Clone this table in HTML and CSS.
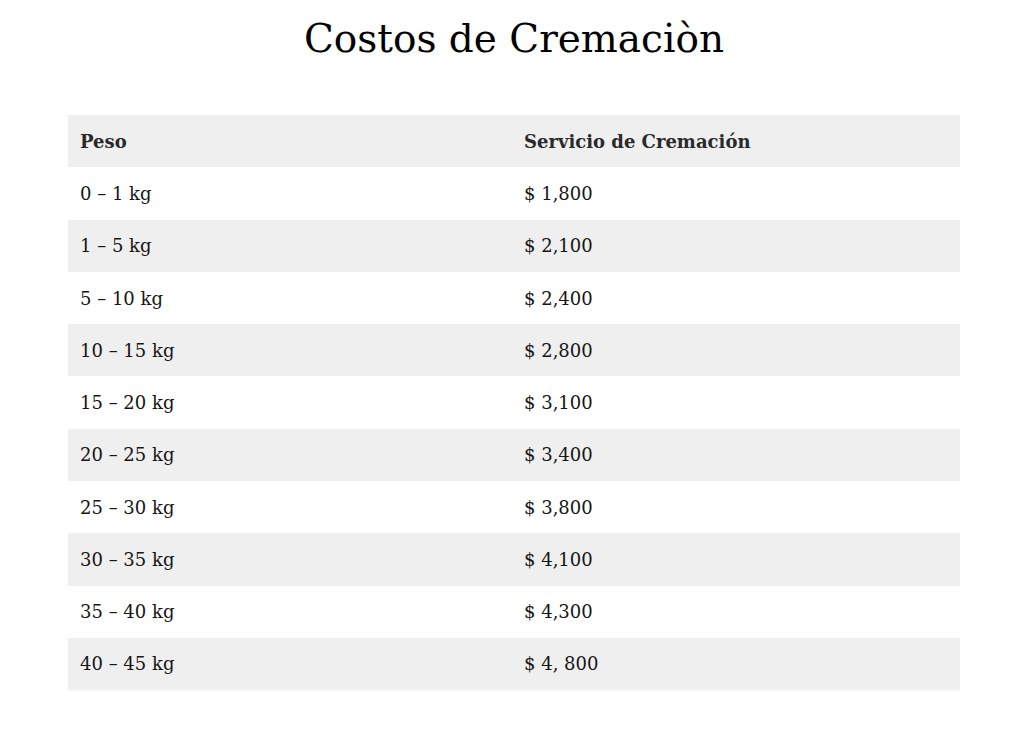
FILE: index.html
```html
<!DOCTYPE html>
<html lang="es">
<head>
<meta charset="utf-8">
<title>Costos de Cremación</title>
<link rel="stylesheet" href="styles.css">
</head>
<body>
<main class="page">
  <h1 class="title">Costos de Cremaciòn</h1>
  <table class="prices">
    <colgroup><col class="col-weight"><col class="col-price"></colgroup>
    <thead>
      <tr><th>Peso</th><th>Servicio de Cremación</th></tr>
    </thead>
    <tbody>
      <tr><td>0 – 1 kg</td><td>$ 1,800</td></tr>
      <tr><td>1 – 5 kg</td><td>$ 2,100</td></tr>
      <tr><td>5 – 10 kg</td><td>$ 2,400</td></tr>
      <tr><td>10 – 15 kg</td><td>$ 2,800</td></tr>
      <tr><td>15 – 20 kg</td><td>$ 3,100</td></tr>
      <tr><td>20 – 25 kg</td><td>$ 3,400</td></tr>
      <tr><td>25 – 30 kg</td><td>$ 3,800</td></tr>
      <tr><td>30 – 35 kg</td><td>$ 4,100</td></tr>
      <tr><td>35 – 40 kg</td><td>$ 4,300</td></tr>
      <tr><td>40 – 45 kg</td><td>$ 4, 800</td></tr>
    </tbody>
  </table>
</main>
</body>
</html>
```
FILE: styles.css
```css
html, body {
  margin: 0;
  padding: 0;
  background: #ffffff;
}
body {
  font-family: "DejaVu Serif", "Liberation Serif", serif;
  color: #161616;
}
.page {
  display: flex;
  flex-direction: column;
  align-items: center;
  padding: 0 64px 0 68px;
}
.title {
  margin: 14px 0 0;
  font-size: 39px;
  font-weight: normal;
  line-height: 50px;
  color: #000;
}
.prices {
  margin-top: 51px;
  width: 892px;
  table-layout: fixed;
  border-collapse: collapse;
  font-size: 18px;
  border-bottom: 2px solid #f5f5f5;
}
.col-weight { width: 444px; }
.col-price { width: 448px; }
.prices th,
.prices td {
  text-align: left;
  font-weight: normal;
  padding: 0 12px;
  height: 52.3px;
  box-sizing: border-box;
  white-space: nowrap;
}
.prices thead tr {
  background: #efefef;
}
.prices tbody tr:nth-child(even) {
  background: #efefef;
}
.prices th {
  font-weight: bold;
  color: #2a2a2a;
}
```
